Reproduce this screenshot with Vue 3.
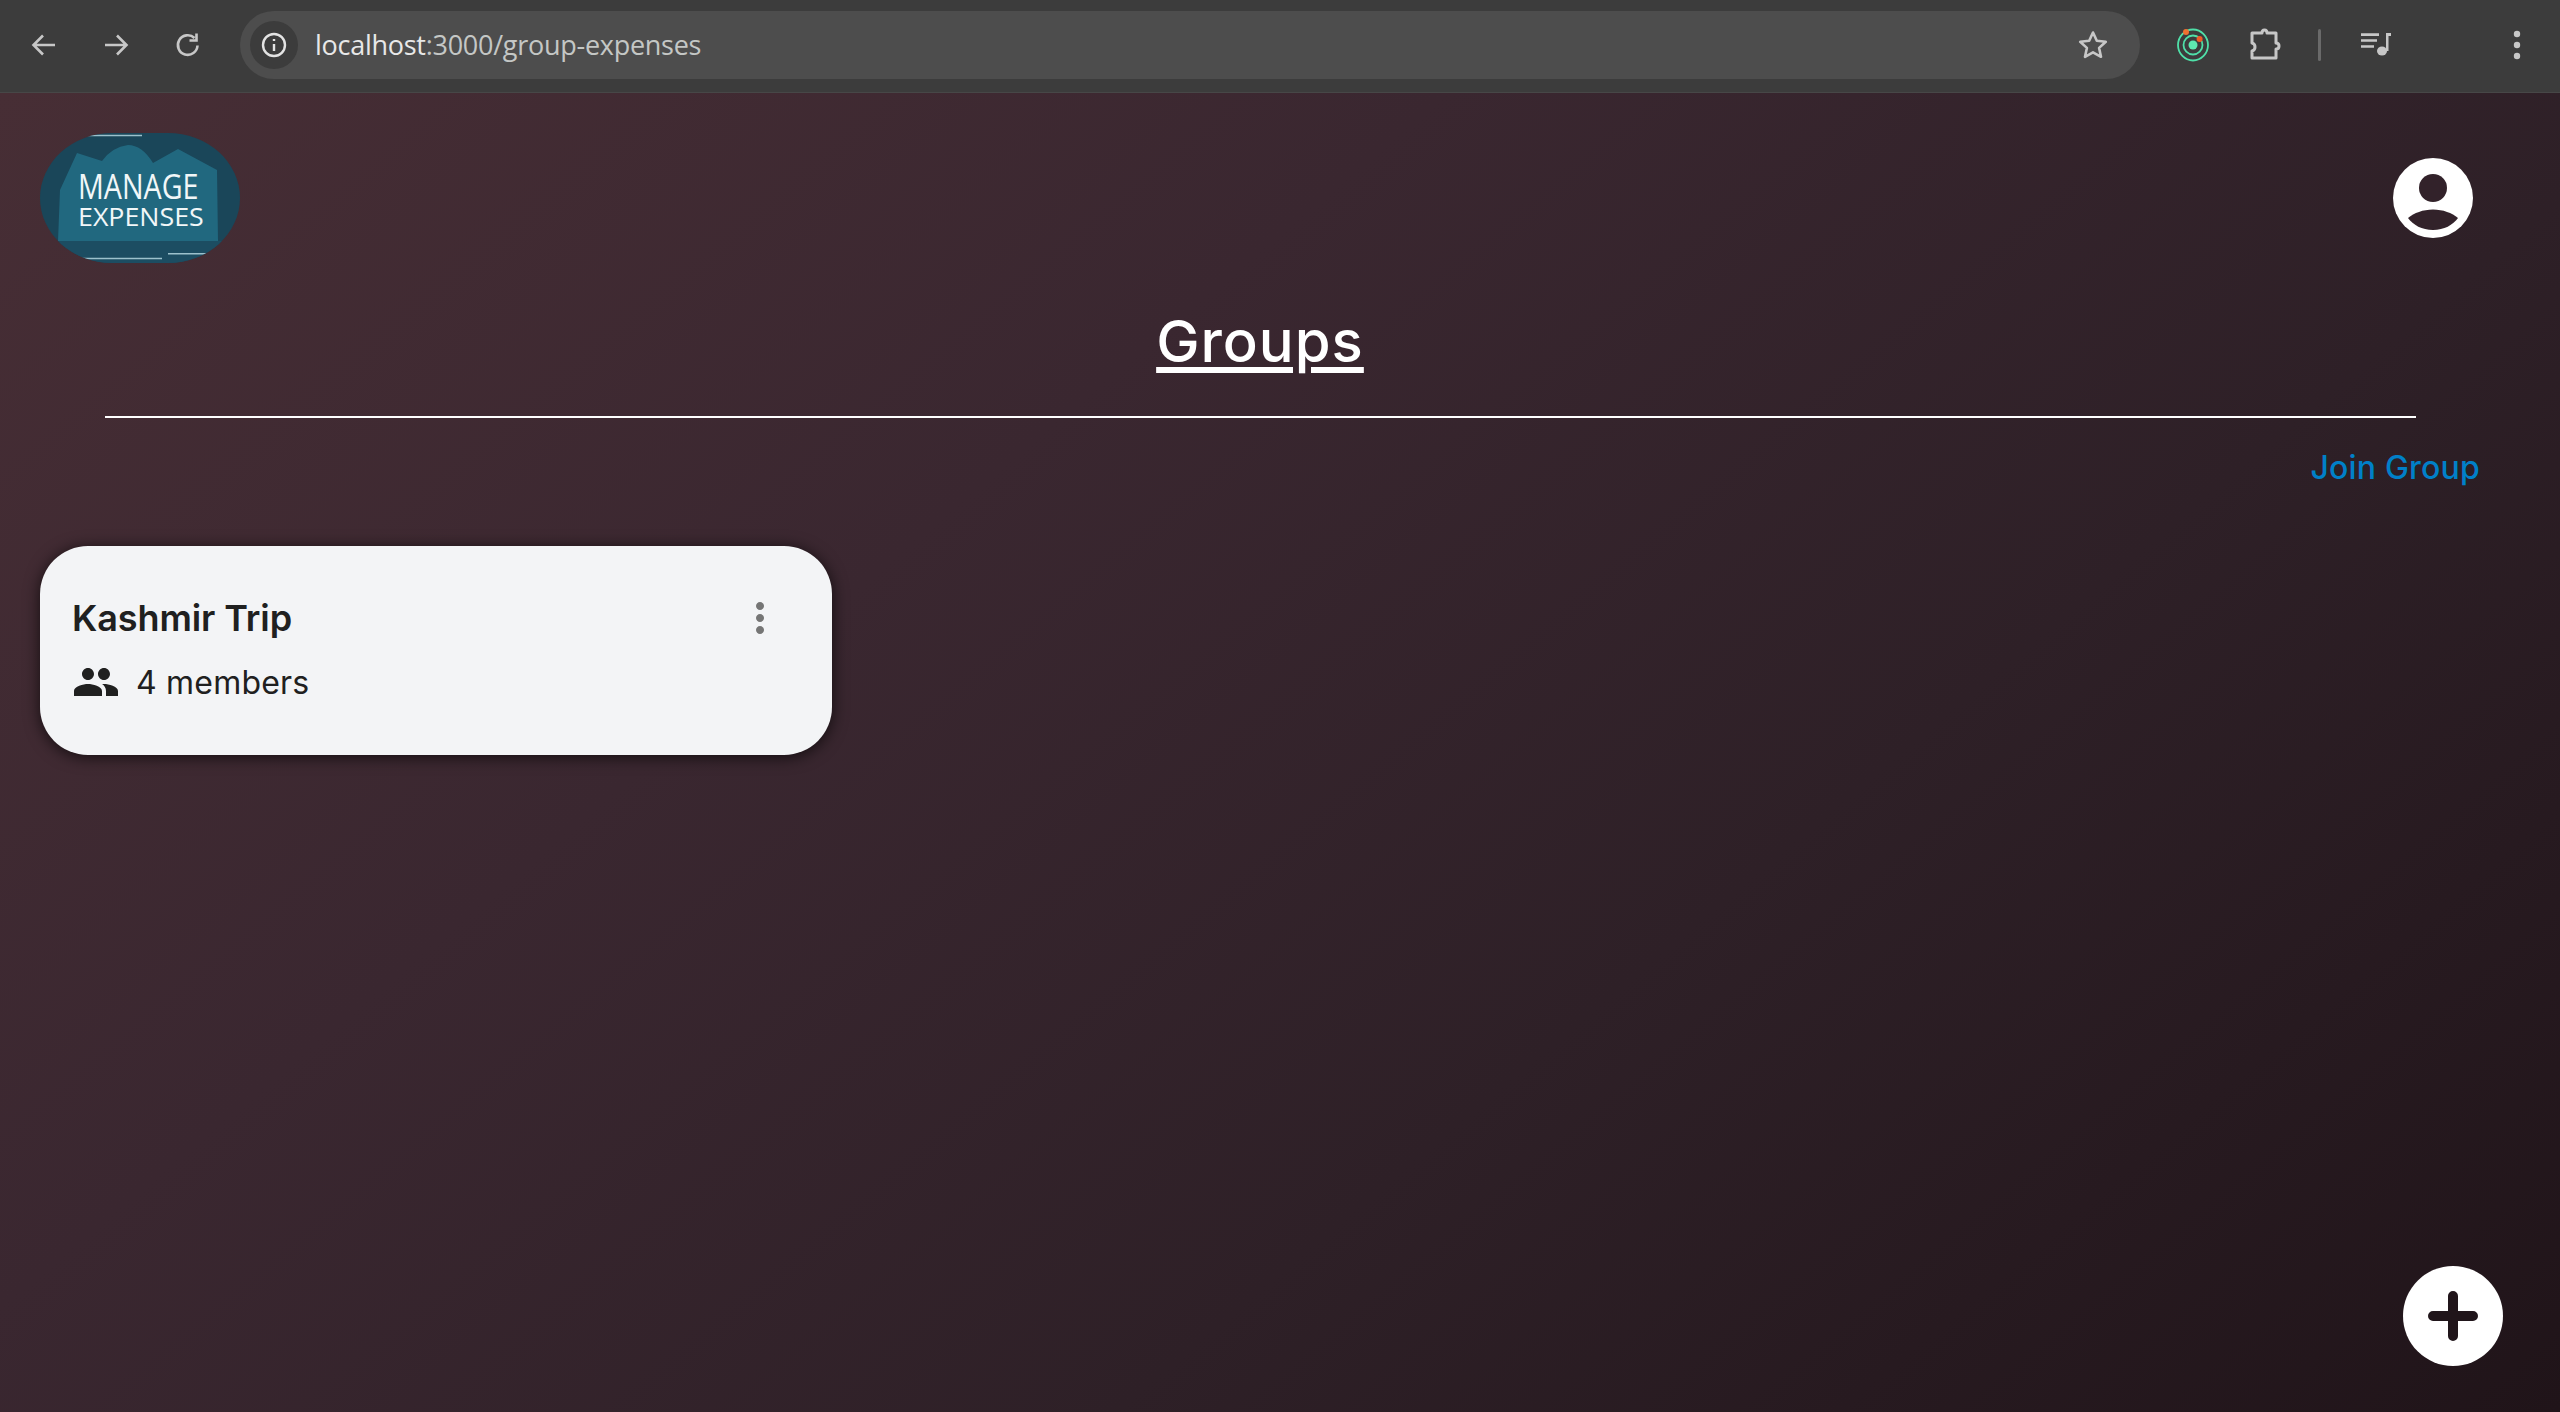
<script setup>
const group = { name: 'Kashmir Trip', members: 4 }
</script>

<template>
  <div class="window">
    <div class="toolbar">
      <div class="nav-btn">
        <svg width="32" height="32" viewBox="0 0 32 32"><path d="M27 16H6M15 6.500 5.500 16l9.500 9.500" /></svg>
      </div>
      <div class="nav-btn">
        <svg width="32" height="32" viewBox="0 0 32 32"><path d="M5 16h21M17 6.500l9.500 9.500-9.500 9.500" /></svg>
      </div>
      <div class="nav-btn">
        <svg width="32" height="32" viewBox="0 0 32 32"><path d="M25.500 16.500A9.800 9.800 0 1 1 22.500 9M24.500 4.500v7h-7" /></svg>
      </div>
      <div class="omnibox">
        <div class="site-info">
          <svg width="28" height="28" viewBox="0 0 28 28">
            <circle cx="14" cy="14" r="11" />
            <path d="M14 13v7M14 8v2" />
          </svg>
        </div>
        <span class="url"><span class="host">localhost</span>:3000/group-expenses</span>
        <svg class="star" width="34" height="34" viewBox="0 0 34 34">
          <path d="m17 4.500 3.800 8.300 9 1-6.700 6.100 1.900 8.900-8-4.500-8 4.500 1.900-8.900-6.700-6.100 9-1z" />
        </svg>
      </div>
      <div class="actions">
        <svg class="ext-orbit" width="36" height="40" viewBox="0 0 36 40">
          <ellipse cx="18" cy="20" rx="15" ry="15.500" fill="none" stroke="#4fe0a8" stroke-width="1.800" />
          <circle cx="18" cy="20" r="9.500" fill="none" stroke="#4fe0a8" stroke-width="1.800" />
          <circle cx="18" cy="20" r="4.500" fill="#5ee8b0" />
          <circle cx="11" cy="7" r="3" fill="#f07030" />
          <circle cx="24.600" cy="14" r="3" fill="#f05a28" />
        </svg>
        <svg class="puzzle" width="36" height="36" viewBox="0 0 36 36">
          <path d="M4 6h10c0-4 5-4 5 0h9v10c4 0 4 6 0 6v9H4v-7c4-1 4-7 0-8z" />
        </svg>
        <div class="separator"></div>
        <svg class="media" width="34" height="30" viewBox="0 0 34 30">
          <path d="M3 3.300h18V6H3zM3 9.300h16v2.400H3zM3 15.300h13v2.400H3zM28 3h5v3h-2.500v15H28z" />
          <ellipse cx="24" cy="21" rx="5" ry="4.500" />
        </svg>
        <svg class="menu" width="10" height="32" viewBox="0 0 10 32">
          <circle cx="5" cy="5" r="3.200" /><circle cx="5" cy="16" r="3.200" /><circle cx="5" cy="27" r="3.200" />
        </svg>
      </div>
    </div>

    <main class="page">
      <header class="top-row">
        <div class="logo">
          <svg width="200" height="130" viewBox="0 0 200 130">
            <defs>
              <clipPath id="logo-clip"><rect width="200" height="130" rx="72" ry="65" /></clipPath>
            </defs>
            <g clip-path="url(#logo-clip)">
              <rect width="200" height="130" fill="#1a4659" />
              <path d="M18 108 20 57 37 20l25 8Q72 14 88 12q14 0 25 18l25-14 39 21 1 71z" fill="#21687f" />
              <path d="M0 108h200v22H0z" fill="#1c4d62" />
              <path d="M43 2.500h59M39 125.500h83M128 120.700h42" stroke="#9cc1cc" stroke-width="1.500" />
            </g>
          </svg>
          <div class="logo-text">
            <span class="logo-big">MANAGE</span>
            <span class="logo-small">EXPENSES</span>
          </div>
        </div>
        <svg class="avatar" width="80" height="80" viewBox="0 0 80 80">
          <circle cx="40" cy="40" r="40" fill="#fff" />
          <circle cx="40" cy="30" r="14" fill="#32222a" />
          <path d="M15 60c6-5 15-8.500 25-8.500s19 3.500 25 8.500c-5 7-14 12-25 12s-20-5-25-12z" fill="#32222a" />
        </svg>
      </header>

      <h1 class="title">Groups</h1>
      <hr class="divider" />

      <div class="join-row">
        <a class="join-link">Join Group</a>
      </div>

      <section class="group-grid">
        <article class="group-card">
          <div class="card-head">
            <h2 class="group-name">{{ group.name }}</h2>
            <svg class="more" width="48" height="48" viewBox="0 0 24 24">
              <path d="M12 8c1.100 0 2-.9 2-2s-.9-2-2-2-2 .9-2 2 .9 2 2 2zm0 2c-1.100 0-2 .9-2 2s.9 2 2 2 2-.9 2-2-.9-2-2-2zm0 6c-1.100 0-2 .9-2 2s.9 2 2 2 2-.9 2-2-.9-2-2-2z" />
            </svg>
          </div>
          <div class="card-members">
            <svg class="people" width="48" height="48" viewBox="0 0 24 24">
              <path d="M16 11c1.660 0 2.990-1.340 2.990-3S17.660 5 16 5c-1.660 0-3 1.340-3 3s1.340 3 3 3zm-8 0c1.660 0 2.990-1.340 2.990-3S9.660 5 8 5C6.340 5 5 6.340 5 8s1.340 3 3 3zm0 2c-2.330 0-7 1.170-7 3.500V19h14v-2.500c0-2.330-4.670-3.500-7-3.500zm8 0c-.29 0-.62.02-.97.05 1.160.84 1.970 1.970 1.970 3.450V19h6v-2.500c0-2.330-4.670-3.500-7-3.500z" />
            </svg>
            <span>{{ group.members }} members</span>
          </div>
        </article>
      </section>

      <button class="fab" aria-label="Add group">
        <svg width="50" height="50" viewBox="0 0 50 50"><path d="M25 5v40M5 25h40" /></svg>
      </button>
    </main>
  </div>
</template>

<style>
html, body {
  margin: 0;
  background: #3c3c3c;
}
</style>

<style scoped>
.window {
  display: flex;
  flex-direction: column;
  height: 100vh;
  overflow: hidden;
  font-family: "Inter", "Liberation Sans", sans-serif;
}

.toolbar {
  display: flex;
  align-items: center;
  flex: none;
  box-sizing: border-box;
  height: 93px;
  padding: 0 0 3px 8px;
  background: #3c3c3c;
  border-bottom: 1px solid #474747;
}

.nav-btn {
  display: flex;
  align-items: center;
  justify-content: center;
  width: 72px;
  height: 72px;
}

.nav-btn svg path {
  fill: none;
  stroke: #c7c7c7;
  stroke-width: 2.600;
}

.omnibox {
  display: flex;
  align-items: center;
  flex: 1;
  height: 68px;
  margin-left: 16px;
  padding: 0 30px 0 10px;
  border-radius: 34px;
  background: #4d4d4d;
}

.site-info {
  display: flex;
  align-items: center;
  justify-content: center;
  width: 48px;
  height: 48px;
  border-radius: 50%;
  background: #3c3c3c;
}

.site-info svg {
  fill: none;
  stroke: #e3e3e3;
  stroke-width: 2.400;
}

.url {
  flex: 1;
  margin-left: 17px;
  font-family: "Open Sans", "Liberation Sans", sans-serif;
  font-size: 27px;
  letter-spacing: -0.27px;
  color: #c4c7c5;
}

.host {
  color: #e8e8e8;
}

.star path {
  fill: none;
  stroke: #c7c7c7;
  stroke-width: 2.600;
  stroke-linejoin: round;
}

.actions {
  display: flex;
  align-items: center;
  flex: none;
  width: 420px;
  height: 60px;
}

.ext-orbit {
  margin-left: 35px;
}

.puzzle {
  margin-left: 37px;
}

.puzzle path {
  fill: none;
  stroke: #c7c7c7;
  stroke-width: 3;
  stroke-linejoin: round;
}

.separator {
  width: 3px;
  height: 32px;
  margin-left: 34px;
  border-radius: 2px;
  background: #6a6a6a;
}

.media {
  margin-left: 37px;
  fill: #c7c7c7;
}

.menu {
  margin-left: 120px;
  fill: #c7c7c7;
}

.page {
  position: relative;
  flex: 1;
  padding: 40px 80px 0 40px;
  background: linear-gradient(140deg, #472e35 0%, #3a2730 35%, #2e2027 65%, #201419 100%);
}

.top-row {
  display: flex;
  align-items: center;
  justify-content: space-between;
  padding-right: 7px;
}

.logo {
  position: relative;
  width: 200px;
  height: 130px;
}

.logo svg {
  display: block;
}

.logo-text {
  position: absolute;
  top: 37px;
  left: 38px;
  display: flex;
  flex-direction: column;
  align-items: flex-start;
  font-family: "Open Sans", sans-serif;
  font-weight: 500;
  color: #f1f7f8;
  white-space: nowrap;
}

.logo-big {
  font-size: 35px;
  line-height: 31px;
  transform: scaleX(0.82);
  transform-origin: left top;
}

.logo-small {
  font-size: 26px;
  line-height: 30px;
  transform: scaleX(1.03);
  transform-origin: left top;
}

.avatar {
  display: block;
}

.title {
  margin: 40px 0 0;
  text-align: center;
  font-size: 58px;
  line-height: 76px;
  font-weight: 500;
  letter-spacing: 1px;
  color: #fff;
  text-decoration: underline;
  text-decoration-thickness: 6px;
  text-underline-offset: 5px;
}

.divider {
  height: 2px;
  margin: 37px 64px 0 65px;
  border: 0;
  background: #fff;
}

.join-row {
  display: flex;
  justify-content: flex-end;
  margin-top: 30px;
}

.join-link {
  font-size: 32px;
  line-height: 40px;
  font-weight: 500;
  letter-spacing: 0.2px;
  color: #0080c8;
}

.group-grid {
  display: grid;
  grid-template-columns: 792px;
  margin-top: 58px;
}

.group-card {
  box-sizing: border-box;
  height: 209px;
  padding: 48px 48px 0 32px;
  border-radius: 48px;
  background: #f3f4f6;
  box-shadow: 0 2px 16px rgba(0, 0, 0, 0.7);
  color: #202020;
}

.card-head {
  display: flex;
  align-items: center;
  justify-content: space-between;
  height: 48px;
}

.group-name {
  margin: 0;
  font-size: 36px;
  font-weight: 600;
  letter-spacing: -0.1px;
}

.more {
  fill: #757575;
}

.card-members {
  display: flex;
  align-items: center;
  gap: 16px;
  height: 48px;
  margin-top: 16px;
  font-size: 32px;
  letter-spacing: 0.2px;
}

.people {
  fill: #202020;
}

.fab {
  position: absolute;
  right: 57px;
  bottom: 46px;
  display: flex;
  align-items: center;
  justify-content: center;
  width: 100px;
  height: 100px;
  padding: 0;
  border: 0;
  border-radius: 50%;
  background: #fff;
}

.fab path {
  fill: none;
  stroke: #20151a;
  stroke-width: 10;
  stroke-linecap: round;
}
</style>
